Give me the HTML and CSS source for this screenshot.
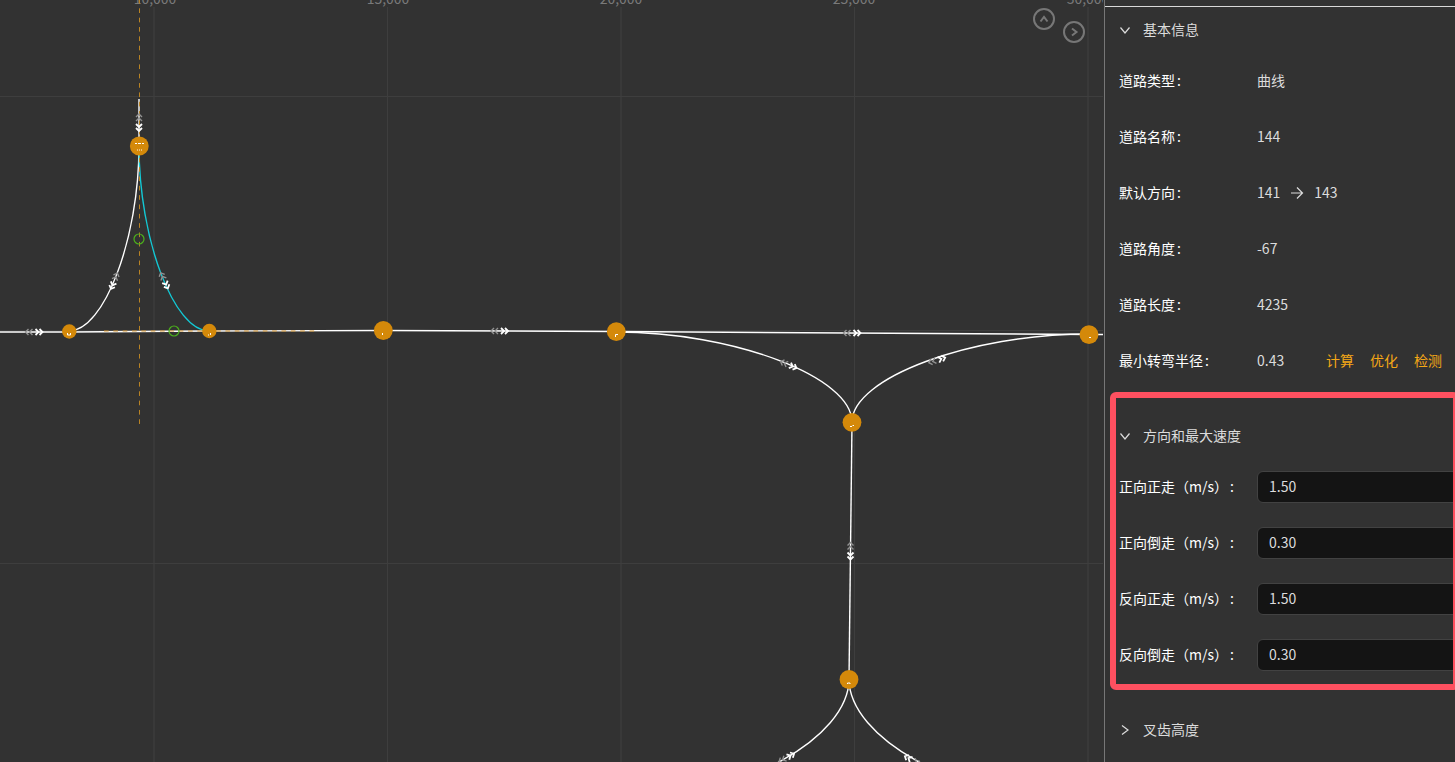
FILE: index.html
```html
<!DOCTYPE html>
<html lang="zh-CN">
<head>
  <meta charset="UTF-8" />
  <meta name="viewport" content="width=device-width, initial-scale=1" />
  <title>道路编辑</title>
  <link rel="stylesheet" href="styles.css">
</head>
<body>
  <main class="map" aria-label="地图画布">
    <svg class="map-canvas" role="img" aria-label="道路图">
      <defs>
        <g id="dir">
          <path class="dir-back" d="M-2 -3 L-5 0 L-2 3 M-6 -3 L-9 0 L-6 3" />
          <path class="dir-front" d="M1 -3 L4 0 L1 3 M5 -3 L8 0 L5 3" />
        </g>
      </defs>

      <!-- grid -->
      <g class="grid">
        <path class="wide" d="M154 7 V2000 M621 7 V2000 M1088 7 V2000" />
        <path d="M387.5 7 V2000 M854.5 7 V2000" />
        <path d="M0 96.5 H3000 M0 330.5 H3000 M0 563.5 H3000" />
      </g>
      <g class="axis">
        <text x="155" y="4">10,000</text>
        <text x="388" y="4">15,000</text>
        <text x="621" y="4">20,000</text>
        <text x="854" y="4">25,000</text>
        <text x="1088" y="4">30,000</text>
      </g>

      <!-- roads -->
      <g class="road">
        <path d="M139 99 V146" />
        <path d="M0 332 L69 332 L209 331 L383 330.5 L616 331.5 L1089 334.5 H3000" />
        <path d="M139 146 C139 239 104 331 69 331" />
        <path d="M616 332 C734 332 852 377 852 422" />
        <path d="M852 422 C852 378 970 334 1089 334" />
        <path d="M852 422 L849 679" />
        <path d="M849 679 C849 738 741 798 633 798" />
        <path d="M849 679 C849 738 957 798 1065 798" />
        <path class="selected" d="M139 146 C139 239 174 331 209 331" />
      </g>

      <g class="guide">
        <path class="guide-v" d="M139.5 -1 V424" />
        <path d="M104 331 H315" />
      </g>
      <g class="handle">
        <circle cx="139" cy="239" r="5" />
        <circle cx="174" cy="331" r="5" />
      </g>

      <!-- travel directions -->
      <use href="#dir" transform="translate(34.500 332)" />
      <use href="#dir" transform="translate(139 123) rotate(90)" />
      <use href="#dir" transform="translate(114 281.500) rotate(112)" />
      <use href="#dir" transform="translate(164.500 281) rotate(65)" />
      <use href="#dir" transform="translate(500 331)" />
      <use href="#dir" transform="translate(852.500 333)" />
      <use href="#dir" transform="translate(789 365) rotate(22)" />
      <use href="#dir" transform="translate(937.500 360) rotate(-17)" />
      <use href="#dir" transform="translate(850.500 551.500) rotate(90)" />
      <use href="#dir" transform="translate(787 757.500) rotate(-28)" />
      <use href="#dir" transform="translate(912 760) rotate(208)" />

      <!-- stations -->
      <g class="node">
        <circle cx="139.3" cy="146" r="9.4" />
        <circle cx="69.3" cy="331.5" r="7.2" />
        <circle cx="209.3" cy="331" r="7.2" />
        <circle cx="383.3" cy="330.5" r="9.4" />
        <circle cx="616.3" cy="331.7" r="9.4" />
        <circle cx="1089" cy="334.7" r="9.4" />
        <circle cx="852" cy="422.3" r="9.4" />
        <circle cx="849" cy="679.5" r="9.4" />
      </g>
      <path class="node-mark" d="M135 143.5 h2 M138 143.5 h3 M142 143.5 h2 M67.500 333 v2 h3 v-2 M208 335 h1 M210.500 333 v2 M382.500 333 v2 M615.500 337 v-2.500 h2.500 M1089 337.500 h2 M850 426.500 h2 M852.500 425.500 h1.500 M847.500 684 v-1 h2.500 v1" />
      <path class="node-mark faint" d="M137.500 149 v2 M139.500 149 v2 M141.500 149 v2" />
    </svg>

    <button type="button" class="map-btn map-btn-up" aria-label="向上">
      <svg width="22" height="22" viewBox="0 0 22 22"><circle cx="11" cy="11" r="10" /><path d="M7.500 13.500 L11 9 L14.500 13.500" /></svg>
    </button>
    <button type="button" class="map-btn map-btn-right" aria-label="向右">
      <svg width="22" height="22" viewBox="0 0 22 22"><circle cx="11" cy="11" r="10" /><path d="M9 7.500 L13.500 11 L9 14.500" /></svg>
    </button>
  </main>

  <aside class="panel" aria-label="道路属性">
    <section class="section">
      <button type="button" class="section-header" aria-expanded="true">
        <svg width="12" height="12" viewBox="0 0 12 12"><path d="M1.500 3.500 L6 9 L10.500 3.500" /></svg>
        <span>基本信息</span>
      </button>
      <dl class="fields">
        <div class="field"><dt>道路类型</dt><dd>曲线</dd></div>
        <div class="field"><dt>道路名称</dt><dd>144</dd></div>
        <div class="field">
          <dt>默认方向</dt>
          <dd class="direction">
            <span>141</span>
            <svg width="14" height="14" viewBox="0 0 14 14" aria-label="到"><path d="M1 7 H12.500 M7 1.500 L12.500 7 L7 12.500" /></svg>
            <span>143</span>
          </dd>
        </div>
        <div class="field"><dt>道路角度</dt><dd>-67</dd></div>
        <div class="field"><dt>道路长度</dt><dd>4235</dd></div>
        <div class="field">
          <dt>最小转弯半径</dt>
          <dd class="radius">
            <span>0.43</span>
            <button type="button">计算</button>
            <button type="button">优化</button>
            <button type="button">检测</button>
          </dd>
        </div>
      </dl>
    </section>

    <section class="section highlighted">
      <button type="button" class="section-header" aria-expanded="true">
        <svg width="12" height="12" viewBox="0 0 12 12"><path d="M1.500 3.500 L6 9 L10.500 3.500" /></svg>
        <span>方向和最大速度</span>
      </button>
      <form class="fields">
        <div class="field">
          <label for="ff">正向正走（m/s）</label>
          <input type="text" id="ff" value="1.50" />
        </div>
        <div class="field">
          <label for="fb">正向倒走（m/s）</label>
          <input type="text" id="fb" value="0.30" />
        </div>
        <div class="field">
          <label for="bf">反向正走（m/s）</label>
          <input type="text" id="bf" value="1.50" />
        </div>
        <div class="field">
          <label for="bb">反向倒走（m/s）</label>
          <input type="text" id="bb" value="0.30" />
        </div>
      </form>
    </section>

    <section class="section">
      <button type="button" class="section-header" aria-expanded="false">
        <svg width="12" height="12" viewBox="0 0 12 12"><path d="M3 1.500 L9 6 L3 10.500" /></svg>
        <span>叉齿高度</span>
      </button>
    </section>
  </aside>
</body>
</html>
```
FILE: styles.css
```css
:root {
  --bg: #323232;
  --grid: #3e3e3e;
  --node: #d4890a;
  --text: #dcdcdc;
  --accent: #f5a816;
  --mark: #ff5060;
}

* {
  margin: 0;
  padding: 0;
  box-sizing: border-box;
}

body {
  display: flex;
  height: 100vh;
  overflow: hidden;
  background: var(--bg);
  color: var(--text);
  font: 14px/22px "Noto Sans CJK SC", sans-serif;
}

button,
input {
  font: inherit;
  color: inherit;
}

button {
  border: none;
  background: none;
  cursor: pointer;
}

svg {
  fill: none;
}

/* Map */
.map {
  position: relative;
  flex: 1;
  min-width: 0;
  margin-right: 1px;
  overflow: hidden;
}

.map-canvas {
  display: block;
  width: 100%;
  height: 100%;
}

.grid {
  stroke: var(--grid);
}

.grid .wide {
  stroke: #393939;
  stroke-width: 2;
}

.axis {
  fill: #7a7a7a;
  text-anchor: middle;
}

.road {
  stroke: #fff;
  stroke-width: 1.4;
}

.road .selected {
  stroke: #13c8d4;
}

.guide {
  stroke: #d6932a;
  stroke-dasharray: 4.67 4.67;
}

.guide-v {
  stroke: #b98324;
}

.handle {
  stroke: #4cb01c;
  stroke-width: 1.2;
}

.dir-front {
  stroke: #fff;
  stroke-width: 1.8;
}

.dir-back {
  stroke: #929292;
  stroke-width: 1.4;
}

.node {
  fill: var(--node);
}

.node-mark {
  stroke: #fff;
}

.faint {
  stroke: #e8c080;
}

.map-btn {
  position: absolute;
  width: 22px;
  height: 22px;
}

.map-btn svg {
  display: block;
  stroke: #777;
  stroke-width: 2;
}

.map-btn-up {
  top: 8px;
  right: 48px;
}

.map-btn-right {
  top: 21px;
  right: 18px;
}

/* Property panel */
.panel {
  flex: 0 0 351px;
  border-left: 1px solid #777;
  padding-top: 6px;
  overflow: hidden;
}

.section {
  position: relative;
}

.section:first-child {
  border-top: 1px solid #d8d8d8;
}

.section-header {
  display: flex;
  align-items: center;
  gap: 12px;
  width: 100%;
  height: 46px;
  padding: 0 14px;
}

.section-header span,
.field dt,
.field dd,
.field label,
.field input {
  padding-bottom: 2px;
}

.section-header svg {
  stroke: var(--text);
  stroke-width: 1.2;
}

.fields {
  display: flex;
  flex-direction: column;
  gap: 24px;
  padding: 12px 0 36px 14px;
}

.field {
  display: flex;
  align-items: center;
  height: 32px;
}

.field dt,
.field label {
  flex: 0 0 138px;
  color: #fff;
}

.field dt::after,
.field label::after {
  content: ":";
  margin-left: 2px;
}

.field input {
  flex: 1;
  min-width: 0;
  height: 32px;
  margin-right: -12px;
  padding-left: 11px;
  border: 1px solid #424242;
  border-radius: 6px;
  background: #141414;
  outline: none;
}

.direction {
  display: flex;
  align-items: center;
  gap: 10px;
}

.direction svg {
  margin-top: 2px;
  stroke: var(--text);
  stroke-width: 1.2;
}

.radius {
  display: flex;
  gap: 16px;
}

.radius span {
  width: 53px;
}

.radius button {
  color: var(--accent);
}

.highlighted::after {
  content: "";
  position: absolute;
  inset: -21px -4px 17px 5px;
  border: 6px solid var(--mark);
  border-radius: 6px;
  pointer-events: none;
}
```
